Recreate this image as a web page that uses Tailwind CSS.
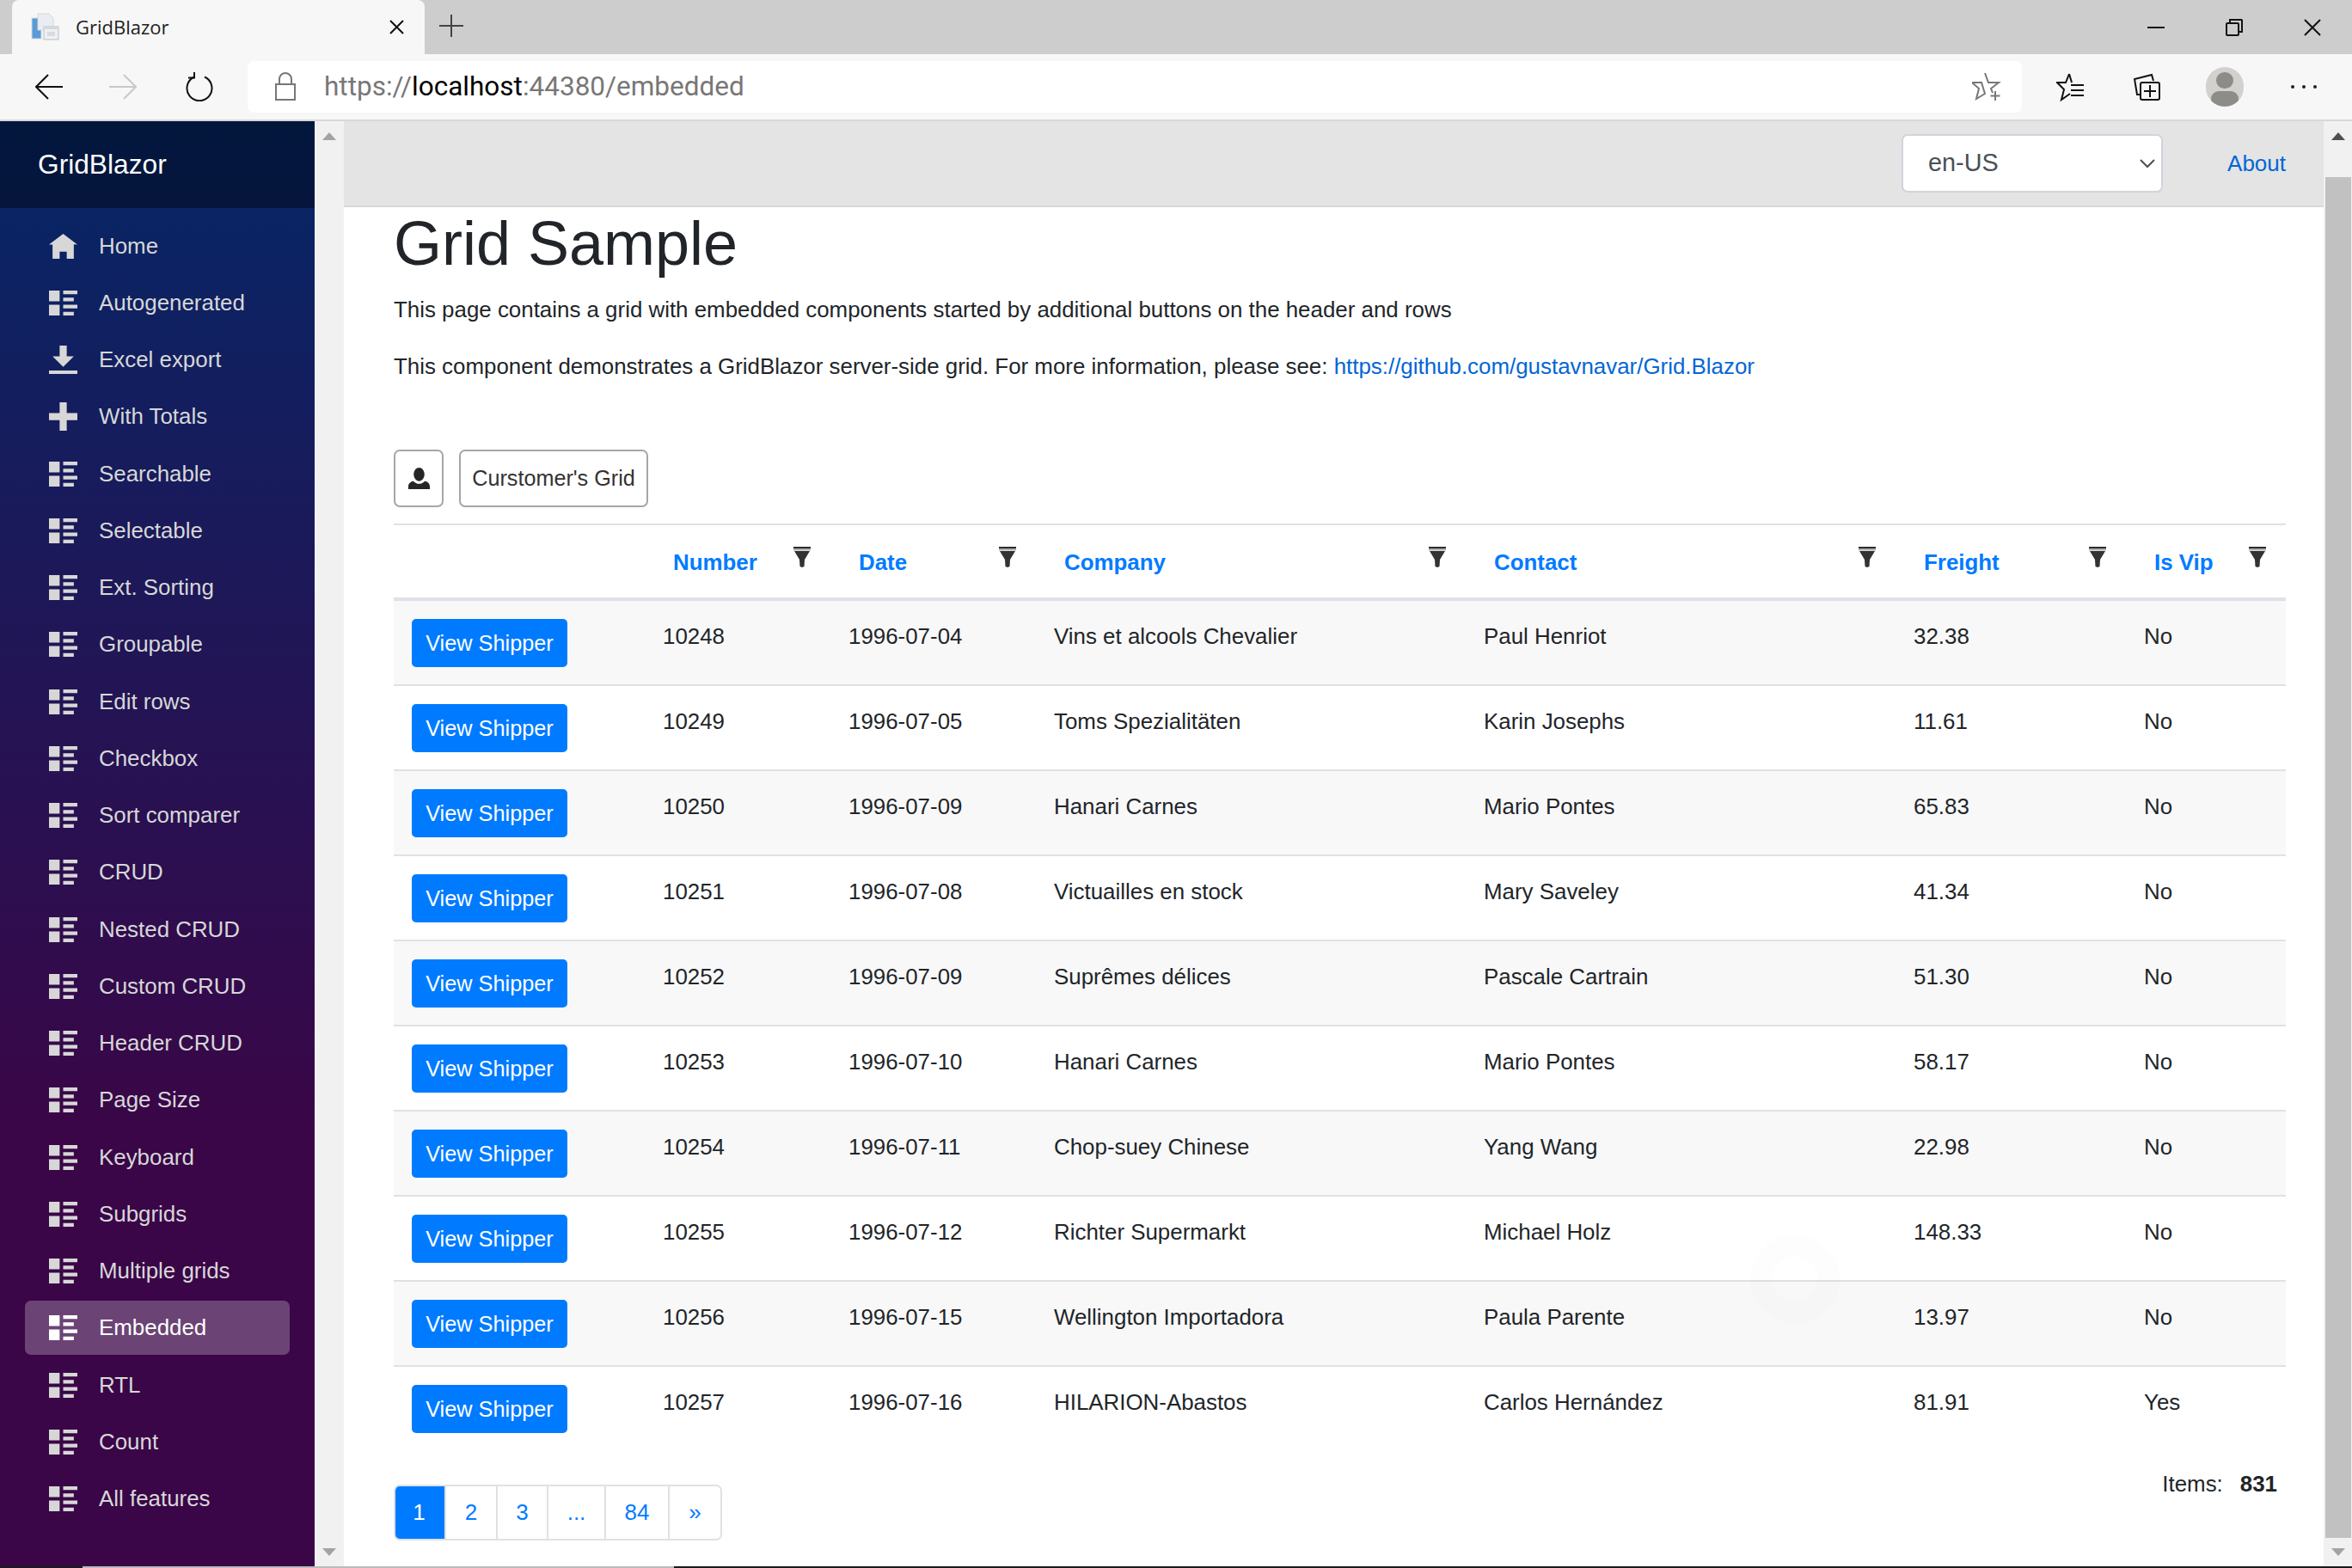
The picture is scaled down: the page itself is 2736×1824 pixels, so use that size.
<!DOCTYPE html>
<html lang="en">
  <head>
    <meta charset="UTF-8" />
    <title>GridBlazor</title>
    <script src="https://cdn.jsdelivr.net/npm/@tailwindcss/browser@4"></script>
  </head>
  <body class="w-[2736px] h-[1824px] overflow-hidden bg-white text-[#212529] [font-family:'Liberation_Sans',sans-serif]">
    <svg class="hidden">
      <symbol id="list" viewBox="0 0 8 7"><path fill="currentColor" d="M0 0v3h3v-3h-3zm4 0v1h4v-1h-4zm0 2v1h3v-1h-3zm-4 2v3h3v-3h-3zm4 0v1h4v-1h-4zm0 2v1h3v-1h-3z" /></symbol>
      <symbol id="filter" viewBox="0 0 20 24"><rect width="20" height="2.5" fill="#2e2e2e" /><rect y="2.5" width="20" height="2" fill="#b5b5b5" /><path fill="#333" d="M1 5h18l-6 10-.5 8-2.500 1-2.500-1-.5-8z" /></symbol>
    </svg>

    <!-- Browser tab strip -->
    <div class="h-[63px] bg-[#cdcdcd] flex items-end pl-[14px] [font-family:'Open_Sans',sans-serif]">
      <div class="w-[480px] h-[63px] bg-[#f7f7f7] rounded-t-[8px] flex items-center pl-[22px] pr-[24px]">
        <svg class="w-[33px] h-[33px] shrink-0" viewBox="0 0 33 33">
          <rect x="1" y="6" width="11" height="24" fill="#5b9bd5" stroke="#cfdbe6" />
          <path d="M8 1h13l5 5v14H8z" fill="#e9edf1" stroke="#d3d8dd" />
          <rect x="15" y="16" width="17" height="15" fill="#eef0f2" stroke="#b9bfc5" />
          <rect x="15" y="16" width="17" height="3" fill="#d5d9dd" />
          <rect x="19" y="22" width="9" height="5" fill="#d8dbde" />
        </svg>
        <span class="ml-[19px] text-[22px] text-[#222] flex-1">GridBlazor</span>
        <svg class="w-[17px] h-[17px]" viewBox="0 0 17 17"><path d="M1 1l15 15M16 1L1 16" stroke="#111" stroke-width="2" /></svg>
      </div>
      <svg class="w-[28px] h-[26px] ml-[17px] mb-[20px]" viewBox="0 0 28 26"><path d="M14 0v26M0 13h28" stroke="#444" stroke-width="2" /></svg>
      <div class="flex-1"></div>
      <div class="flex items-center h-[63px] pr-[36px] gap-[71px]">
        <svg class="w-[20px] h-[20px]" viewBox="0 0 20 20"><path d="M0 10h20" stroke="#111" stroke-width="2" /></svg>
        <svg class="w-[20px] h-[20px]" viewBox="0 0 20 20" fill="none" stroke="#111" stroke-width="2"><rect x="1" y="5" width="14" height="14" rx="1" /><path d="M5 5V1h13.5a.5.5 0 0 1 .5.5V15h-4" /></svg>
        <svg class="w-[20px] h-[20px]" viewBox="0 0 20 20"><path d="M1 1l18 18M19 1L1 19" stroke="#111" stroke-width="2" /></svg>
      </div>
    </div>

    <!-- Browser toolbar -->
    <div class="h-[78px] bg-[#f7f7f7] border-b-2 border-[#d8d8d8] flex items-center pl-[41px] [font-family:'Open_Sans',sans-serif]">
      <svg class="w-[32px] h-[30px]" viewBox="0 0 32 30" fill="none" stroke="#111" stroke-width="2"><path d="M15 1L1 15l14 14M1 15h31" /></svg>
      <svg class="w-[32px] h-[30px] ml-[54px]" viewBox="0 0 32 30" fill="none" stroke="#c8c8c8" stroke-width="2"><path d="M17 1l14 14-14 14M31 15H0" /></svg>
      <svg class="w-[32px] h-[34px] ml-[57px]" viewBox="0 0 32 34" fill="none" stroke="#111" stroke-width="2"><path d="M10 5.500a14.500 14.500 0 1 0 12 0" /><path d="M10 0v6.500H3" /></svg>
      <div class="w-[2064px] h-[60px] ml-[40px] bg-white rounded-[8px] flex items-center pl-[32px] pr-[24px] mb-[1px]">
        <svg class="w-[24px] h-[33px] shrink-0" viewBox="0 0 24 33" fill="none" stroke="#777" stroke-width="2"><rect x="1" y="14" width="22" height="18" /><path d="M5 14V8a7 7 0 0 1 14 0v6" /></svg>
        <span class="ml-[33px] text-[31.500px] text-[#777] flex-1 [font-family:'Roboto',sans-serif]">https://<span class="text-black">localhost</span>:44380/embedded</span>
        <svg class="w-[34px] h-[34px]" viewBox="0 0 34 34" fill="none" stroke="#777" stroke-width="2"><path d="M15 1L19 12H31L22 19L24 24M15 25L5 31L8 19L0 12H11Z" /><path d="M27 22v11M21.500 27.500h11" /></svg>
      </div>
      <svg class="w-[33px] h-[33px] ml-[40px]" viewBox="0 0 33 33" fill="none" stroke="#111" stroke-width="2"><path d="M15 1L18 11M15 1L11 11H1L9 19L6 31L16 24" /><path d="M17 14h15M17 20h15M17 26h15" /></svg>
      <svg class="w-[31px] h-[32px] ml-[57px]" viewBox="0 0 31 32" fill="none" stroke="#111" stroke-width="2"><path d="M7 25H4L1 7l20-5 2 7" /><rect x="8" y="11" width="22" height="20" rx="2" fill="#f7f7f7" /><path d="M19 14v14M12 21h14" /></svg>
      <div class="w-[44px] h-[46px] ml-[53px] rounded-full bg-[#d2d1cd] overflow-hidden flex flex-col items-center">
        <div class="w-[20px] h-[28px] mt-[6px] rounded-full bg-[#8e8c88]"></div>
        <div class="w-[32px] h-[28px] mt-[3px] rounded-full bg-[#8e8c88]"></div>
      </div>
      <div class="ml-[55px] flex gap-[9px]">
        <div class="w-[4px] h-[4px] rounded-full bg-[#222]"></div>
        <div class="w-[4px] h-[4px] rounded-full bg-[#222]"></div>
        <div class="w-[4px] h-[4px] rounded-full bg-[#222]"></div>
      </div>
    </div>

    <div class="h-[1681px] flex">
      <!-- Sidebar -->
      <div class="w-[366px] shrink-0 bg-[linear-gradient(180deg,#052767_0%,#3a0647_70%)] text-[#d7d7d7] text-[25.9px]">
        <div class="h-[101px] bg-black/40 flex items-center pl-[44px] text-[31.7px] text-white">GridBlazor</div>
        <div class="pt-[12.500px]">
          <div class="h-[66.26px] px-[29px]"><a class="h-[63px] flex items-center pl-[28px] rounded-[7px]"><svg class="w-[33px] h-[29px] shrink-0" viewBox="0 0 8 7"><path fill="currentColor" d="M4 0l-4 3h1v4h2v-2h2v2h2v-4.030l1 .030-4-3z" /></svg><span class="ml-[25px]">Home</span></a></div>
          <div class="h-[66.26px] px-[29px]"><a class="h-[63px] flex items-center pl-[28px] rounded-[7px]"><svg class="w-[33px] h-[29px] shrink-0"><use href="#list" /></svg><span class="ml-[25px]">Autogenerated</span></a></div>
          <div class="h-[66.26px] px-[29px]"><a class="h-[63px] flex items-center pl-[28px] rounded-[7px]"><svg class="w-[33px] h-[33px] shrink-0" viewBox="0 0 8 8"><path fill="currentColor" d="M3 0v3h-2l3 3 3-3h-2v-3h-2zm-3 7v1h8v-1h-8z" /></svg><span class="ml-[25px]">Excel export</span></a></div>
          <div class="h-[66.26px] px-[29px]"><a class="h-[63px] flex items-center pl-[28px] rounded-[7px]"><svg class="w-[33px] h-[33px] shrink-0" viewBox="0 0 8 8"><path fill="currentColor" d="M3 0v3h-3v2h3v3h2v-3h3v-2h-3v-3h-2z" /></svg><span class="ml-[25px]">With Totals</span></a></div>
          <div class="h-[66.26px] px-[29px]"><a class="h-[63px] flex items-center pl-[28px] rounded-[7px]"><svg class="w-[33px] h-[29px] shrink-0"><use href="#list" /></svg><span class="ml-[25px]">Searchable</span></a></div>
          <div class="h-[66.26px] px-[29px]"><a class="h-[63px] flex items-center pl-[28px] rounded-[7px]"><svg class="w-[33px] h-[29px] shrink-0"><use href="#list" /></svg><span class="ml-[25px]">Selectable</span></a></div>
          <div class="h-[66.26px] px-[29px]"><a class="h-[63px] flex items-center pl-[28px] rounded-[7px]"><svg class="w-[33px] h-[29px] shrink-0"><use href="#list" /></svg><span class="ml-[25px]">Ext. Sorting</span></a></div>
          <div class="h-[66.26px] px-[29px]"><a class="h-[63px] flex items-center pl-[28px] rounded-[7px]"><svg class="w-[33px] h-[29px] shrink-0"><use href="#list" /></svg><span class="ml-[25px]">Groupable</span></a></div>
          <div class="h-[66.26px] px-[29px]"><a class="h-[63px] flex items-center pl-[28px] rounded-[7px]"><svg class="w-[33px] h-[29px] shrink-0"><use href="#list" /></svg><span class="ml-[25px]">Edit rows</span></a></div>
          <div class="h-[66.26px] px-[29px]"><a class="h-[63px] flex items-center pl-[28px] rounded-[7px]"><svg class="w-[33px] h-[29px] shrink-0"><use href="#list" /></svg><span class="ml-[25px]">Checkbox</span></a></div>
          <div class="h-[66.26px] px-[29px]"><a class="h-[63px] flex items-center pl-[28px] rounded-[7px]"><svg class="w-[33px] h-[29px] shrink-0"><use href="#list" /></svg><span class="ml-[25px]">Sort comparer</span></a></div>
          <div class="h-[66.26px] px-[29px]"><a class="h-[63px] flex items-center pl-[28px] rounded-[7px]"><svg class="w-[33px] h-[29px] shrink-0"><use href="#list" /></svg><span class="ml-[25px]">CRUD</span></a></div>
          <div class="h-[66.26px] px-[29px]"><a class="h-[63px] flex items-center pl-[28px] rounded-[7px]"><svg class="w-[33px] h-[29px] shrink-0"><use href="#list" /></svg><span class="ml-[25px]">Nested CRUD</span></a></div>
          <div class="h-[66.26px] px-[29px]"><a class="h-[63px] flex items-center pl-[28px] rounded-[7px]"><svg class="w-[33px] h-[29px] shrink-0"><use href="#list" /></svg><span class="ml-[25px]">Custom CRUD</span></a></div>
          <div class="h-[66.26px] px-[29px]"><a class="h-[63px] flex items-center pl-[28px] rounded-[7px]"><svg class="w-[33px] h-[29px] shrink-0"><use href="#list" /></svg><span class="ml-[25px]">Header CRUD</span></a></div>
          <div class="h-[66.26px] px-[29px]"><a class="h-[63px] flex items-center pl-[28px] rounded-[7px]"><svg class="w-[33px] h-[29px] shrink-0"><use href="#list" /></svg><span class="ml-[25px]">Page Size</span></a></div>
          <div class="h-[66.26px] px-[29px]"><a class="h-[63px] flex items-center pl-[28px] rounded-[7px]"><svg class="w-[33px] h-[29px] shrink-0"><use href="#list" /></svg><span class="ml-[25px]">Keyboard</span></a></div>
          <div class="h-[66.26px] px-[29px]"><a class="h-[63px] flex items-center pl-[28px] rounded-[7px]"><svg class="w-[33px] h-[29px] shrink-0"><use href="#list" /></svg><span class="ml-[25px]">Subgrids</span></a></div>
          <div class="h-[66.26px] px-[29px]"><a class="h-[63px] flex items-center pl-[28px] rounded-[7px]"><svg class="w-[33px] h-[29px] shrink-0"><use href="#list" /></svg><span class="ml-[25px]">Multiple grids</span></a></div>
          <div class="h-[66.26px] px-[29px]"><a class="h-[63px] flex items-center pl-[28px] rounded-[7px] bg-white/25 text-white"><svg class="w-[33px] h-[29px] shrink-0"><use href="#list" /></svg><span class="ml-[25px]">Embedded</span></a></div>
          <div class="h-[66.26px] px-[29px]"><a class="h-[63px] flex items-center pl-[28px] rounded-[7px]"><svg class="w-[33px] h-[29px] shrink-0"><use href="#list" /></svg><span class="ml-[25px]">RTL</span></a></div>
          <div class="h-[66.26px] px-[29px]"><a class="h-[63px] flex items-center pl-[28px] rounded-[7px]"><svg class="w-[33px] h-[29px] shrink-0"><use href="#list" /></svg><span class="ml-[25px]">Count</span></a></div>
          <div class="h-[66.26px] px-[29px]"><a class="h-[63px] flex items-center pl-[28px] rounded-[7px]"><svg class="w-[33px] h-[29px] shrink-0"><use href="#list" /></svg><span class="ml-[25px]">All features</span></a></div>
        </div>
      </div>

      <!-- Sidebar scrollbar -->
      <div class="w-[34px] shrink-0 bg-[#f1f1f1] flex flex-col items-center justify-between pt-[13px] pb-[12px]">
        <svg class="w-[16px] h-[9px]" viewBox="0 0 16 9"><path d="M8 0l8 9H0z" fill="#a3a3a3" /></svg>
        <svg class="w-[16px] h-[9px]" viewBox="0 0 16 9"><path d="M0 0h16L8 9z" fill="#a3a3a3" /></svg>
      </div>

      <!-- Main -->
      <div class="w-[2303px] shrink-0 relative">
        <div class="h-[100px] bg-[#e4e4e4] border-b-2 border-[#d8d8d8] flex items-center justify-end pr-[44px] mt-0">
          <div class="w-[304px] h-[68px] bg-white border-2 border-[#ced4da] rounded-[7px] flex items-center justify-between pl-[29px] pr-[7px] text-[28.800px] text-[#495057]">
            en-US
            <svg class="w-[18px] h-[11px]" viewBox="0 0 18 11" fill="none" stroke="#495057" stroke-width="2"><path d="M1 1l8 8 8-8" /></svg>
          </div>
          <a class="ml-[75px] text-[26px] text-[#0366d6]">About</a>
        </div>

        <div class="pl-[58px] pr-[44px] text-[25.9px] leading-[39px]">
          <h1 class="text-[72px] leading-[85px] mb-[15px]">Grid Sample</h1>
          <p class="mb-[27px]">This page contains a grid with embedded components started by additional buttons on the header and rows</p>
          <p>This component demonstrates a GridBlazor server-side grid. For more information, please see: <a class="text-[#0366d6]">https://github.com/gustavnavar/Grid.Blazor</a></p>

          <div class="flex gap-[18px] mt-[77px] mb-[19px]">
            <div class="w-[58px] h-[67px] border-2 border-[#a6a6a6] rounded-[7px] flex items-center justify-center">
              <svg class="w-[25px] h-[25px]" viewBox="0 0 8 8"><path fill="#262626" d="M4 0c-1.100 0-2 1.120-2 2.500s.9 2.500 2 2.500 2-1.120 2-2.500-.9-2.500-2-2.500zm-2.090 5c-1.060.05-1.910.92-1.910 2v1h8v-1c0-1.080-.84-1.950-1.910-2-.54.61-1.280 1-2.090 1-.81 0-1.550-.39-2.090-1z" /></svg>
            </div>
            <div class="w-[220px] h-[67px] border-2 border-[#a6a6a6] rounded-[7px] flex items-center justify-center text-[25.200px] text-[#333]">Curstomer's Grid</div>
          </div>

          <table class="w-[2201px] table-fixed border-separate border-spacing-0">
            <colgroup>
              <col class="w-[292px]" /><col class="w-[216px]" /><col class="w-[239px]" /><col class="w-[500px]" /><col class="w-[500px]" /><col class="w-[268px]" /><col class="w-[186px]" />
            </colgroup>
            <thead>
              <tr class="h-[90px] text-left text-[#007bff]">
                <th class="border-t-2 border-b-4 border-[#dee2e6] border-t-[#dee2e6]"></th>
                <th class="border-t-2 border-b-4 border-[#dee2e6] font-bold"><div class="flex justify-between pl-[33px] pr-[23px]"><a class="pt-[3px]">Number</a><svg class="w-[20px] h-[24px] mt-[4px]"><use href="#filter" /></svg></div></th>
                <th class="border-t-2 border-b-4 border-[#dee2e6] font-bold"><div class="flex justify-between pl-[33px] pr-[23px]"><a class="pt-[3px]">Date</a><svg class="w-[20px] h-[24px] mt-[4px]"><use href="#filter" /></svg></div></th>
                <th class="border-t-2 border-b-4 border-[#dee2e6] font-bold"><div class="flex justify-between pl-[33px] pr-[23px]"><a class="pt-[3px]">Company</a><svg class="w-[20px] h-[24px] mt-[4px]"><use href="#filter" /></svg></div></th>
                <th class="border-t-2 border-b-4 border-[#dee2e6] font-bold"><div class="flex justify-between pl-[33px] pr-[23px]"><a class="pt-[3px]">Contact</a><svg class="w-[20px] h-[24px] mt-[4px]"><use href="#filter" /></svg></div></th>
                <th class="border-t-2 border-b-4 border-[#dee2e6] font-bold"><div class="flex justify-between pl-[33px] pr-[23px]"><a class="pt-[3px]">Freight</a><svg class="w-[20px] h-[24px] mt-[4px]"><use href="#filter" /></svg></div></th>
                <th class="border-t-2 border-b-4 border-[#dee2e6] font-bold"><div class="flex justify-between pl-[33px] pr-[23px]"><a class="pt-[3px]">Is Vip</a><svg class="w-[20px] h-[24px] mt-[4px]"><use href="#filter" /></svg></div></th>
              </tr>
            </thead>
            <tbody class="[&_td]:border-b-2 [&_td]:border-[#dee2e6] [&_td]:h-[99px] [&_td]:align-top [&_td]:pt-[22px] [&_td]:pl-[21px] [&_tr:nth-child(odd)]:bg-[#f8f8f8] [&_tr:last-child_td]:border-transparent">
              <tr><td class="!pt-[21px]"><a class="w-[181px] h-[56px] rounded-[5px] bg-[#007bff] text-white flex items-center justify-center text-[25.300px]">View Shipper</a></td><td>10248</td><td>1996-07-04</td><td>Vins et alcools Chevalier</td><td>Paul Henriot</td><td>32.38</td><td>No</td></tr>
              <tr><td class="!pt-[21px]"><a class="w-[181px] h-[56px] rounded-[5px] bg-[#007bff] text-white flex items-center justify-center text-[25.300px]">View Shipper</a></td><td>10249</td><td>1996-07-05</td><td>Toms Spezialitäten</td><td>Karin Josephs</td><td>11.61</td><td>No</td></tr>
              <tr><td class="!pt-[21px]"><a class="w-[181px] h-[56px] rounded-[5px] bg-[#007bff] text-white flex items-center justify-center text-[25.300px]">View Shipper</a></td><td>10250</td><td>1996-07-09</td><td>Hanari Carnes</td><td>Mario Pontes</td><td>65.83</td><td>No</td></tr>
              <tr><td class="!pt-[21px]"><a class="w-[181px] h-[56px] rounded-[5px] bg-[#007bff] text-white flex items-center justify-center text-[25.300px]">View Shipper</a></td><td>10251</td><td>1996-07-08</td><td>Victuailles en stock</td><td>Mary Saveley</td><td>41.34</td><td>No</td></tr>
              <tr><td class="!pt-[21px]"><a class="w-[181px] h-[56px] rounded-[5px] bg-[#007bff] text-white flex items-center justify-center text-[25.300px]">View Shipper</a></td><td>10252</td><td>1996-07-09</td><td>Suprêmes délices</td><td>Pascale Cartrain</td><td>51.30</td><td>No</td></tr>
              <tr><td class="!pt-[21px]"><a class="w-[181px] h-[56px] rounded-[5px] bg-[#007bff] text-white flex items-center justify-center text-[25.300px]">View Shipper</a></td><td>10253</td><td>1996-07-10</td><td>Hanari Carnes</td><td>Mario Pontes</td><td>58.17</td><td>No</td></tr>
              <tr><td class="!pt-[21px]"><a class="w-[181px] h-[56px] rounded-[5px] bg-[#007bff] text-white flex items-center justify-center text-[25.300px]">View Shipper</a></td><td>10254</td><td>1996-07-11</td><td>Chop-suey Chinese</td><td>Yang Wang</td><td>22.98</td><td>No</td></tr>
              <tr><td class="!pt-[21px]"><a class="w-[181px] h-[56px] rounded-[5px] bg-[#007bff] text-white flex items-center justify-center text-[25.300px]">View Shipper</a></td><td>10255</td><td>1996-07-12</td><td>Richter Supermarkt</td><td>Michael Holz</td><td>148.33</td><td>No</td></tr>
              <tr><td class="!pt-[21px]"><a class="w-[181px] h-[56px] rounded-[5px] bg-[#007bff] text-white flex items-center justify-center text-[25.300px]">View Shipper</a></td><td>10256</td><td>1996-07-15</td><td>Wellington Importadora</td><td>Paula Parente</td><td>13.97</td><td>No</td></tr>
              <tr><td class="!pt-[21px]"><a class="w-[181px] h-[56px] rounded-[5px] bg-[#007bff] text-white flex items-center justify-center text-[25.300px]">View Shipper</a></td><td>10257</td><td>1996-07-16</td><td>HILARION-Abastos</td><td>Carlos Hernández</td><td>81.91</td><td>Yes</td></tr>
            </tbody>
          </table>

          <div class="flex justify-between w-[2201px] mt-[38px]">
            <div class="flex h-[65px] text-[#007bff] text-[26px] border-2 border-[#dee2e6] rounded-[7px] overflow-hidden divide-x-2 divide-[#dee2e6]">
              <a class="w-[61px] -ml-[2px] -my-[2px] bg-[#007bff] text-white flex items-center justify-center">1</a>
              <a class="w-[60px] flex items-center justify-center !border-l-0">2</a>
              <a class="w-[59px] flex items-center justify-center">3</a>
              <a class="w-[67px] flex items-center justify-center">...</a>
              <a class="w-[74px] flex items-center justify-center">84</a>
              <a class="w-[59px] flex items-center justify-center">»</a>
            </div>
            <div class="pr-[10px] -mt-[20px]">Items:<b class="ml-[20px]">831</b></div>
          </div>
        </div>

        <!-- faint loading ring left over the grid -->
        <div class="absolute left-[1636px] top-[1295px] w-[104px] h-[104px] rounded-full border-[26px] border-black/[0.007]"></div>
      </div>

      <!-- Page scrollbar -->
      <div class="w-[33px] shrink-0 bg-[#f1f1f1] flex flex-col items-center">
        <svg class="w-[16px] h-[9px] mt-[13px]" viewBox="0 0 16 9"><path d="M8 0l8 9H0z" fill="#505050" /></svg>
        <div class="w-[30px] h-[1583px] mt-[43px] bg-[#c1c1c1]"></div>
        <svg class="w-[16px] h-[9px] mt-[12px]" viewBox="0 0 16 9"><path d="M0 0h16L8 9z" fill="#a3a3a3" /></svg>
      </div>
    </div>

    <!-- Screen edge below the window -->
    <div class="h-[2px] bg-[#1a1a1a] flex pl-[96px]"><div class="w-[688px] bg-[#bbbbbb]"></div></div>
  </body>
</html>
